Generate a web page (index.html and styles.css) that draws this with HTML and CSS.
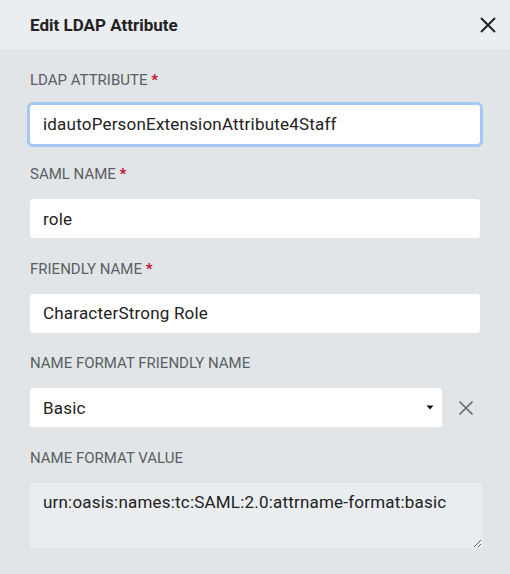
FILE: index.html
```html
<!DOCTYPE html>
<html>
<head>
<meta charset="utf-8">
<link rel="stylesheet" href="styles.css">
</head>
<body>
<div class="dialog">
  <div class="header">
    <h2 class="title">Edit LDAP Attribute</h2>
    <button class="close" aria-label="Close">
      <svg width="16" height="16" viewBox="0 0 16 16"><path d="M1 1L15 15M15 1L1 15" stroke="#222" stroke-width="2" fill="none"/></svg>
    </button>
  </div>
  <div class="body">
    <div class="field">
      <label class="label">LDAP ATTRIBUTE <span class="req">*</span></label>
      <input class="input focus" type="text" value="idautoPersonExtensionAttribute4Staff">
    </div>
    <div class="field">
      <label class="label">SAML NAME <span class="req">*</span></label>
      <input class="input" type="text" value="role">
    </div>
    <div class="field">
      <label class="label">FRIENDLY NAME <span class="req">*</span></label>
      <input class="input" type="text" value="CharacterStrong Role">
    </div>
    <div class="field">
      <label class="label">NAME FORMAT FRIENDLY NAME</label>
      <div class="select-row">
        <div class="select">
          <span class="select-value">Basic</span>
          <svg class="caret" width="8" height="5" viewBox="0 0 8 5"><path d="M0.5 0.5H7.5L4 4.5Z" fill="#111"/></svg>
        </div>
        <button class="clear" aria-label="Clear">
          <svg width="16" height="16" viewBox="0 0 16 16"><path d="M1.5 1.5L14.5 14.5M14.5 1.5L1.5 14.5" stroke="#666" stroke-width="1.6" fill="none"/></svg>
        </button>
      </div>
    </div>
    <div class="field">
      <label class="label">NAME FORMAT VALUE</label>
      <textarea class="textarea" readonly>urn:oasis:names:tc:SAML:2.0:attrname-format:basic</textarea>
    </div>
  </div>
</div>
</body>
</html>
```

FILE: styles.css
```css
* { box-sizing: border-box; }
html, body {
  margin: 0;
  padding: 0;
  background: #e1e5e8;
  font-family: Roboto, "Liberation Sans", sans-serif;
}
.dialog {
  width: 510px;
  height: 574px;
  background: #e1e5e8;
}
.header {
  height: 49px;
  background: #ebeef1;
  display: flex;
  align-items: center;
  justify-content: space-between;
  padding: 0 14px 0 30px;
}
.title {
  margin: 0;
  font-size: 17px;
  font-weight: 700;
  color: #222;
}
.close, .clear {
  border: 0;
  background: none;
  padding: 0;
  display: flex;
  cursor: pointer;
}
.body {
  padding: 20.5px 30px 0 30px;
}
.field {
  margin-bottom: 20.5px;
}
.label {
  display: block;
  font-size: 15px;
  line-height: 20px;
  color: #5a5f63;
  margin-bottom: 15px;
}
.req {
  color: #c8102e;
  font-weight: 700;
}
.input {
  display: block;
  width: 450px;
  height: 39px;
  border: 0;
  border-radius: 3px;
  background: #fff;
  padding: 0 13px;
  font-family: Roboto, "Liberation Sans", sans-serif;
  font-size: 17px;
  letter-spacing: 0.2px;
  color: #222;
  outline: none;
}
.input.focus {
  box-shadow: 0 0 0 3px #a2c8f3;
}
.select-row {
  display: flex;
  align-items: center;
  gap: 16px;
}
.select {
  width: 412px;
  height: 39px;
  background: #fff;
  border-radius: 3px;
  display: flex;
  align-items: center;
  justify-content: space-between;
  padding: 0 8px 0 13px;
  font-size: 17px;
  letter-spacing: 0.2px;
  color: #222;
}
.textarea {
  display: block;
  width: 452px;
  height: 65px;
  border: 0;
  border-radius: 3px;
  background: #eaedf0;
  padding: 9px 13px;
  font-family: Roboto, "Liberation Sans", sans-serif;
  font-size: 17px;
  letter-spacing: 0.2px;
  line-height: 20px;
  color: #222;
  resize: vertical;
  outline: none;
}
```
